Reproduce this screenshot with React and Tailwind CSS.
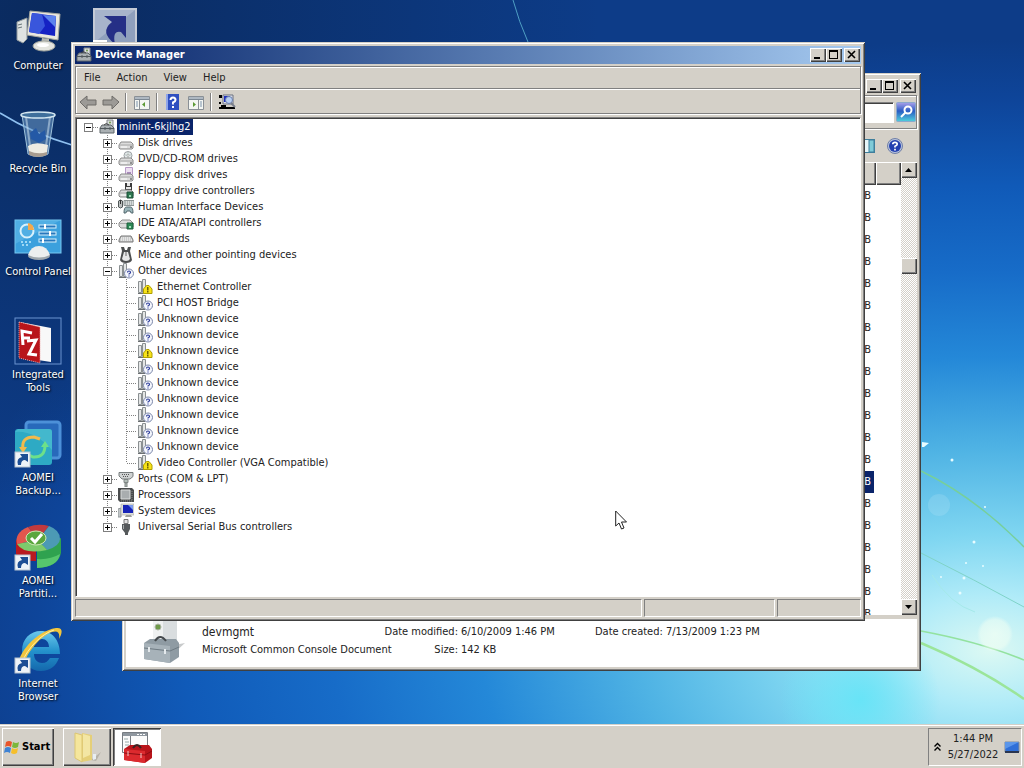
import { useState } from "react";

const RAISED =
  "bg-[#d4d0c8] shadow-[inset_1px_1px_#fff,inset_-1px_-1px_#404040,inset_-2px_-2px_#808080]";
const FRAME =
  "bg-[#d4d0c8] p-1 shadow-[inset_1px_1px_#d4d0c8,inset_-1px_-1px_#404040,inset_2px_2px_#fff,inset_-2px_-2px_#808080]";
const ETCHED = "border border-[#808080] shadow-[1px_1px_#fff,inset_1px_1px_#fff]";

/* ---------- wallpaper ---------- */

const Wallpaper = () => (
  <svg className="absolute inset-0 h-full w-full" viewBox="0 0 1024 724" preserveAspectRatio="none" aria-hidden="true">
    <defs>
      <radialGradient id="sky" gradientUnits="userSpaceOnUse" cx="0" cy="0" r="1" gradientTransform="translate(990 650) scale(1060 610)">
        <stop offset="0" stopColor="#dcf9f3" />
        <stop offset=".09" stopColor="#b0ebf8" />
        <stop offset=".19" stopColor="#7fd6f1" />
        <stop offset=".33" stopColor="#4fb3e4" />
        <stop offset=".48" stopColor="#2488d8" />
        <stop offset=".62" stopColor="#176cc8" />
        <stop offset=".76" stopColor="#105ab8" />
        <stop offset=".9" stopColor="#0e459a" />
        <stop offset="1" stopColor="#0d3c88" />
      </radialGradient>
      <radialGradient id="cyan">
        <stop offset="0" stopColor="#68e4f7" />
        <stop offset="1" stopColor="#68e4f7" stopOpacity="0" />
      </radialGradient>
      <radialGradient id="night">
        <stop offset="0" stopColor="#0a2a5e" />
        <stop offset="1" stopColor="#0a2a5e" stopOpacity="0" />
      </radialGradient>
      <radialGradient id="bokeh">
        <stop offset="0" stopColor="#f2fff4" stopOpacity=".7" />
        <stop offset=".8" stopColor="#f2fff4" stopOpacity=".5" />
        <stop offset="1" stopColor="#f2fff4" stopOpacity="0" />
      </radialGradient>
    </defs>
    <rect width="1024" height="724" fill="url(#sky)" />
    <ellipse cx="40" cy="20" rx="560" ry="480" fill="url(#night)" />
    <ellipse cx="860" cy="700" rx="80" ry="80" fill="url(#cyan)" />
    <path d="M0 113Q34 134 72 145" fill="none" stroke="#8fc0f0" strokeWidth="1.5" />
    <path d="M513 0Q519 22 528 42" fill="none" stroke="#4f9fc4" strokeWidth="1" />
    <g fill="none">
      <path d="M921 471Q975 497 1024 547" stroke="#77cf9a" strokeWidth="1.5" />
      <path d="M921 553Q975 580 1024 607" stroke="#7fd3c8" strokeWidth="1" />
      <path d="M921 631Q980 642 1024 660" stroke="#93e2a0" strokeWidth="1.5" />
      <path d="M921 643Q980 668 1024 699" stroke="#9be59a" strokeWidth="2.5" />
      <path d="M932 575Q950 604 975 612" stroke="#a5e9ea" strokeWidth="1" />
    </g>
    <circle cx="995" cy="634" r="18" fill="url(#bokeh)" />
    <circle cx="939" cy="505" r="11" fill="#fff" opacity=".12" />
    <g fill="#e8fcff">
      <path d="M922 442l7 1-5 4-2 0z" />
      <circle cx="952" cy="460" r="1.5" />
      <circle cx="974" cy="542" r="1.5" />
      <circle cx="966" cy="563" r="1" />
      <circle cx="964" cy="578" r="1.5" />
      <circle cx="960" cy="593" r="1.5" />
      <circle cx="983" cy="566" r="1" />
      <circle cx="985" cy="507" r="1" />
      <circle cx="941" cy="577" r="1" />
    </g>
  </svg>
);

/* ---------- desktop icons ---------- */

const ShortcutMark = () => (
  <g>
    <rect x="1" y="32" width="15" height="15" fill="#eef3f8" stroke="#b8c4d0" />
    <path d="M4 45Q2 38 8 37L6 34H14V42L11 40Q7 40 7 45Z" fill="#1d4e94" />
  </g>
);

const ComputerIcon = () => (
  <svg viewBox="0 0 48 48" className="h-12 w-12">
    <path d="M3 14L13 10V31L9 35 3 32z" fill="#dfe3e2" stroke="#8f989b" />
    <path d="M4 17l4-1M4 20l4-1" stroke="#687579" />
    <path d="M16 3L46 6 44 32 13 27z" fill="#e9e8df" stroke="#a5a69e" />
    <path d="M18 5L42 8 41 28 15 24z" fill="#1522c4" />
    <path d="M18 5L28 6 31 18 25 26 15 24z" fill="#3956dc" />
    <path d="M29 7L42 8 41 19z" fill="#5c83ee" />
    <path d="M28 30l7 1v5l-8 0z" fill="#b6b8b2" />
    <ellipse cx="30" cy="38" rx="11" ry="5" fill="#e4e5df" stroke="#a2a59d" />
    <ellipse cx="29" cy="37" rx="6" ry="2" fill="#fff" />
  </svg>
);

const RecycleIcon = () => (
  <svg viewBox="0 0 48 48" className="h-12 w-12">
    <path d="M8 4L40 4 34 43Q24 48 14 43z" fill="#6f9cc8" fillOpacity=".55" stroke="#9fc3dc" />
    <path d="M12 6l5 36M36 6l-5 36" stroke="#d5e8f4" strokeOpacity=".5" strokeWidth="2" />
    <path d="M16 22l6-5 3 6 6-4 1 9-7 4-8-4z" fill="#2459a6" />
    <path d="M14 35Q21 30 34 34L33 42Q24 46 15 42z" fill="#efece2" />
    <path d="M15 40Q24 44 33 41L33 44Q24 48 15 44z" fill="#a89c90" />
    <ellipse cx="24" cy="4" rx="17" ry="3" fill="#3f6f9c" stroke="#d5e8f2" strokeWidth="1.5" />
  </svg>
);

const ControlPanelIcon = () => (
  <svg viewBox="0 0 48 48" className="h-12 w-12">
    <rect x="1" y="6" width="46" height="33" fill="#3ba0dd" stroke="#78c8f0" />
    <path d="M1 6H47L1 30z" fill="#68bdec" fillOpacity=".5" />
    <circle cx="13" cy="17" r="6.500" fill="none" stroke="#d9f1fc" strokeWidth="2" />
    <path d="M14 16V9A7 7 0 0 1 20 16z" fill="#f5a94b" />
    <path d="M7 28h2M11 28h2M15 28h2M8 31h2M12 31h2" stroke="#9ed8f5" strokeWidth="2" />
    <g fill="#2677bd" stroke="#d7f0fb">
      <rect x="25" y="11" width="17" height="3" />
      <rect x="25" y="18" width="17" height="3" />
      <rect x="25" y="25" width="17" height="3" />
    </g>
    <path d="M31 10v5M36 17v5M29 24v5" stroke="#fff" strokeWidth="2" />
    <ellipse cx="25" cy="42" rx="11" ry="4" fill="#9fa7ac" />
    <path d="M14 41Q17 32 25 32T36 41Q25 46 14 41z" fill="#eceeee" />
  </svg>
);

const ToolsIcon = () => (
  <svg viewBox="0 0 48 48" className="h-12 w-12">
    <rect x="1" y="1" width="46" height="46" fill="none" stroke="#6b93cf" />
    <path d="M6 5L37 11V45L24 43z" fill="#f8f8f8" />
    <path d="M5 5L26 10V46L5 41z" fill="#b8151b" stroke="#eda5a5" strokeDasharray="1 1" />
    <path d="M9 28L8 14 18 16M9 21L16 21" fill="none" stroke="#fff" strokeWidth="3" />
    <path d="M13 24L22 23 15 37 23 38" fill="none" stroke="#fff" strokeWidth="3" />
  </svg>
);

const BackupIcon = () => (
  <svg viewBox="0 0 48 48" className="h-12 w-12">
    <rect x="12" y="2" width="34" height="36" rx="3" fill="#2869bb" stroke="#4c90d8" strokeWidth="3" />
    <rect x="1" y="9" width="37" height="36" rx="3" fill="#2eaac4" />
    <path d="M1 12Q20 10 38 30V12Q38 9 35 9H4z" fill="#51c2d3" fillOpacity=".6" />
    <path d="M9 29Q7 17 20 17L26 19" fill="none" stroke="#f1ba4c" strokeWidth="3" />
    <path d="M5 27h8l-4 6z" fill="#f1ba4c" />
    <path d="M31 25Q31 38 19 37L13 34" fill="none" stroke="#6de089" strokeWidth="3" />
    <path d="M27 27h8l-4-6z" fill="#6de089" />
    <ShortcutMark />
  </svg>
);

const PartitionIcon = () => (
  <svg viewBox="0 0 48 48" className="h-12 w-12">
    <path d="M2 17V31Q10 39 22 38V24z" fill="#b81a20" />
    <path d="M23 25V45Q44 44 47 30V15z" fill="#2fa24f" />
    <path d="M23 36V45Q44 44 46 31Q36 37 23 36z" fill="#57c66d" />
    <path d="M24 17L3 21Q0 10 14 4z" fill="#e2564d" />
    <path d="M24 17L14 4Q24 0 35 3z" fill="#c03a3e" />
    <path d="M24 17L35 3Q46 7 46 16Q46 23 33 27z" fill="#4c9ab5" />
    <path d="M24 17L33 27Q10 32 3 21z" fill="#7dca6c" />
    <ellipse cx="22" cy="15" rx="10" ry="7" fill="#5aa63d" stroke="#cfe8b8" />
    <path d="M17 15l4 4 7-8" fill="none" stroke="#fff" strokeWidth="3" />
    <ShortcutMark />
  </svg>
);

const BrowserIcon = () => (
  <svg viewBox="0 0 48 48" className="h-12 w-12">
    <defs>
      <linearGradient id="ie" x2="0" y2="1">
        <stop offset="0" stopColor="#6cc8ec" />
        <stop offset=".5" stopColor="#2492cc" />
        <stop offset="1" stopColor="#1468ac" />
      </linearGradient>
    </defs>
    <path
      fill="url(#ie)"
      fillRule="evenodd"
      d="M27 5C38 5 46 14 46 28H20C20 34 24 37 28 37C32 37 34 35 36 32H45C42 40 36 45 27 45C16 45 8 37 8 25C8 13 16 5 27 5ZM20 21H35C35 16 32 13 28 13C23 13 20 16 20 21Z"
    />
    <path d="M5 44C-1 35 18 6 42 2C50 1 48 8 45 13C46 7 44 4 38 6C24 11 10 31 9 42Z" fill="#f2c53d" />
    <path d="M8 36C14 22 27 8 40 4" fill="none" stroke="#fdf0a8" />
    <ShortcutMark />
  </svg>
);

const ShortcutFileIcon = () => (
  <svg viewBox="0 0 48 48" className="h-12 w-12">
    <rect x="3" y="1" width="42" height="44" fill="#8fa0bd" stroke="#c5cbd6" strokeWidth="2" />
    <path d="M4 2H44L4 34z" fill="#b7c2d4" fillOpacity=".6" />
    <path d="M13 8H35V30L30 24Q21 22 24 36Q8 24 21 14z" fill="#252f86" />
    <rect x="2" y="32" width="14" height="14" fill="#fff" />
  </svg>
);

const DESKTOP_ICONS = [
  { lines: ["Computer"], Icon: ComputerIcon },
  { lines: ["Recycle Bin"], Icon: RecycleIcon },
  { lines: ["Control Panel"], Icon: ControlPanelIcon },
  { lines: ["Integrated", "Tools"], Icon: ToolsIcon },
  { lines: ["AOMEI", "Backup..."], Icon: BackupIcon },
  { lines: ["AOMEI", "Partiti..."], Icon: PartitionIcon },
  { lines: ["Internet", "Browser"], Icon: BrowserIcon },
];

const DesktopIcon = ({ lines, Icon }) => (
  <button type="button" className="flex h-[103px] w-full flex-col items-center pt-2 text-white [text-shadow:1px_1px_2px_#000]">
    <Icon />
    <span className="mt-[3px] whitespace-nowrap text-center leading-[13px]">
      {lines.map((line) => (
        <span key={line} className="block">{line}</span>
      ))}
    </span>
  </button>
);

/* ---------- window parts ---------- */

const WindowButtons = () => (
  <div className="flex pr-[1px]">
    <button type="button" aria-label="Minimize" className={`h-[14px] w-4 ${RAISED}`}>
      <svg viewBox="0 0 16 14" className="h-full w-full"><path d="M4 9h6v2H4z" /></svg>
    </button>
    <button type="button" aria-label="Maximize" className={`h-[14px] w-4 ${RAISED}`}>
      <svg viewBox="0 0 16 14" className="h-full w-full">
        <path fillRule="evenodd" d="M3 2h9v9H3zM4 4v6h7V4z" />
      </svg>
    </button>
    <button type="button" aria-label="Close" className={`ml-[2px] h-[14px] w-4 ${RAISED}`}>
      <svg viewBox="0 0 16 14" className="h-full w-full">
        <path d="M4 3l7 7M11 3l-7 7" stroke="#000" strokeWidth="1.6" />
      </svg>
    </button>
  </div>
);

const HelpBadge = () => (
  <g>
    <circle cx="11" cy="10.500" r="4.500" fill="#f4f6fc" stroke="#7a86a8" />
    <path d="M9.500 9.500Q9.500 8 11 8T12.500 9.500Q12.500 10.300 11 11V11.500M11 12.500v1" fill="none" stroke="#2a3a9a" strokeWidth="1.200" />
  </g>
);

const Drive = () => (
  <g>
    <path d="M1 10L3 7H13L15 9V13L14 14H2L1 13z" fill="#dcdcdc" stroke="#8a8a8a" />
    <path d="M1 10H15" stroke="#a8a8a8" />
    <path d="M3 12h6" stroke="#fff" />
    <path d="M12 12h2" stroke="#444" />
  </g>
);

const DEVICE_ART = {
  computer: (
    <g>
      <path d="M8 1h6v8H8z" fill="#d9dcdc" stroke="#858a8c" />
      <circle cx="11" cy="3.500" r="1" fill="#6f9a4a" />
      <path d="M1 9L3 6H12L15 9V14H1z" fill="#aab0b3" stroke="#5f666a" />
      <path d="M1 9.500H15M6 8v3M11 8v3" stroke="#50585c" />
      <path d="M5 6Q7 3 10 6" fill="none" stroke="#444" />
    </g>
  ),
  disk: <Drive />,
  dvd: (
    <g>
      <circle cx="10" cy="4.500" r="4" fill="#e8ecee" stroke="#9a9fa2" />
      <path d="M10 1v7M6.500 4h7" stroke="#b9c6c0" />
      <circle cx="10" cy="4.500" r="1" fill="#fff" stroke="#888" strokeWidth=".5" />
      <Drive />
    </g>
  ),
  floppy: (
    <g>
      <path d="M7.500 .5h7v7h-7z" fill="#ecdff0" stroke="#b79ac6" />
      <path d="M9 5h4v2H9z" fill="#a98abd" />
      <Drive />
    </g>
  ),
  floppyctl: (
    <g>
      <path d="M7 0h7v7H7z" fill="#3c3c3c" />
      <path d="M9 0h3v3H9zM8 4h5v2H8z" fill="#e6e6e6" />
      <Drive />
      <path d="M9 9h6v6H9z" fill="#2d7750" stroke="#1d4e36" />
      <path d="M11 12h2v2h-2z" fill="#9ad4b2" />
    </g>
  ),
  hid: (
    <g>
      <path d="M.5 2Q2.500 0 4.500 2V8Q2.500 10 .5 8z" fill="#bbbfbf" stroke="#515758" />
      <path d="M2.500 1v4" stroke="#333" />
      <path d="M6 1.500h10v5H6z" fill="#d5dada" stroke="#8c9494" />
      <path d="M7 3h8M7 5h8" stroke="#87908f" strokeDasharray="1 1" />
      <path d="M6 14Q6 8 8.500 8H12.500Q15 8 15 14Q13 15 12 12H9Q8 15 6 14z" fill="#9bb6bb" stroke="#52676c" />
    </g>
  ),
  ide: (
    <g>
      <path d="M1 8L4 5H12L15 8V12L13 13H3L1 11z" fill="#dcdcdc" stroke="#8a8a8a" />
      <path d="M1 8.500H15" stroke="#aaa" />
      <path d="M9 8h6v6H9z" fill="#2d8a57" stroke="#1d5e3d" />
      <path d="M11 11h2v2h-2z" fill="#a5e0bd" />
    </g>
  ),
  keyboard: (
    <g>
      <path d="M1 9L3 5H13L15 9V11H1z" fill="#c9caca" stroke="#777" />
      <path d="M3 7h10M3 9h11" stroke="#fff" strokeDasharray="1 1" />
    </g>
  ),
  mouse: (
    <g>
      <path d="M3 0H6L7 3H9L10 0H13L12 4L14 13Q13 16 8 16T2 13L4 4z" fill="#4c4e4f" />
      <path d="M6 5h4l2 7Q11 14 8 14T4 12z" fill="#e7e8e8" />
      <path d="M8 5v4" stroke="#666" />
    </g>
  ),
  other: (
    <g>
      <path d="M1.500 2.500h3v11h-3zM5.500 .5h3v13h-3z" fill="#e4e6e6" stroke="#8b9092" />
      <path d="M1 14.500h7" stroke="#6b6f71" />
      <HelpBadge />
    </g>
  ),
  warn: (
    <g>
      <path d="M1.500 2.500h3v11h-3zM5.500 .5h3v13h-3z" fill="#e4e6e6" stroke="#8b9092" />
      <path d="M1 14.500h7" stroke="#6b6f71" />
      <path d="M6.500 14.500V10L9.500 6.500H12L15 10V14.500z" fill="#f7e21a" stroke="#b0a000" />
      <path d="M10.800 8v3.500M10.800 12v1.500" stroke="#4c4500" strokeWidth="1.200" />
    </g>
  ),
  ports: (
    <g>
      <path d="M1 1.500h14v4L12 8H4L1 5z" fill="#cfd2d2" stroke="#777c7d" />
      <path d="M4 3.500h8M5 5.500h6" stroke="#555" strokeDasharray="1 1" />
      <path d="M6 8.500h4v3H6zM7 12h2v4H7z" fill="#b4bfba" stroke="#808684" />
    </g>
  ),
  cpu: (
    <g>
      <path d="M0 1h14l2 2v12H2l-2-2z" fill="#4a4c4d" />
      <path d="M3 3h9v9H3z" fill="#a9adaf" stroke="#dadcdc" />
      <path d="M14 4v10M3 14h11" stroke="#888" strokeDasharray="1 1" />
    </g>
  ),
  system: (
    <g>
      <path d="M0 6l3-1v9H0z" fill="#c3c7c9" stroke="#90979a" />
      <path d="M3 1h13v11H3z" fill="#dfe0da" stroke="#a9aaa4" strokeWidth=".6" />
      <path d="M5 2h10v8H5z" fill="#1824b8" />
      <path d="M10 2h5v5z" fill="#7a9af0" />
      <path d="M8 12h5l1 2H7z" fill="#9fa19c" />
    </g>
  ),
  usb: (
    <g>
      <path d="M6 .5h4v4H6z" fill="#e2e2e2" stroke="#777" />
      <path d="M4 5h8v5l-2 4v2H7v-2L4 10z" fill="#55595b" />
      <path d="M5.500 6v4" stroke="#a5a9aa" />
    </g>
  ),
};

const DeviceIcon = ({ kind }) => (
  <svg viewBox="0 0 16 16" className="mr-[2px] ml-[1px] h-4 w-4 shrink-0" aria-hidden="true">
    {DEVICE_ART[kind]}
  </svg>
);

/* ---------- tree ---------- */

// line: "" blank, "v" through line, "t" tee, "l" last branch, "h" root stub
const Branch = ({ line, box }) => (
  <svg viewBox="0 0 19 16" className="h-4 w-[19px]" shapeRendering="crispEdges" aria-hidden="true">
    <g stroke="#808080" strokeDasharray="1 1" fill="none">
      {(line === "v" || line === "t") && <path d="M9.500 0V16" />}
      {line === "l" && <path d="M9.500 0V8" />}
      {(line === "t" || line === "l" || line === "h") && <path d="M10 8.500H19" />}
    </g>
    {box && (
      <g>
        <rect x="5.500" y="4.500" width="8" height="8" fill="#fff" stroke="#7f7f7f" />
        <path d="M7 8.500h5" stroke="#000" />
        {box === "+" && <path d="M9.500 6v5" stroke="#000" />}
      </g>
    )}
  </svg>
);

const CATEGORIES = [
  { name: "Disk drives", icon: "disk" },
  { name: "DVD/CD-ROM drives", icon: "dvd" },
  { name: "Floppy disk drives", icon: "floppy" },
  { name: "Floppy drive controllers", icon: "floppyctl" },
  { name: "Human Interface Devices", icon: "hid" },
  { name: "IDE ATA/ATAPI controllers", icon: "ide" },
  { name: "Keyboards", icon: "keyboard" },
  { name: "Mice and other pointing devices", icon: "mouse" },
  {
    name: "Other devices",
    icon: "other",
    children: [
      { name: "Ethernet Controller", icon: "warn" },
      { name: "PCI HOST Bridge", icon: "other" },
      { name: "Unknown device", icon: "other" },
      { name: "Unknown device", icon: "other" },
      { name: "Unknown device", icon: "warn" },
      { name: "Unknown device", icon: "other" },
      { name: "Unknown device", icon: "other" },
      { name: "Unknown device", icon: "other" },
      { name: "Unknown device", icon: "other" },
      { name: "Unknown device", icon: "other" },
      { name: "Unknown device", icon: "other" },
      { name: "Video Controller (VGA Compatible)", icon: "warn" },
    ],
  },
  { name: "Ports (COM & LPT)", icon: "ports" },
  { name: "Processors", icon: "cpu" },
  { name: "System devices", icon: "system" },
  { name: "Universal Serial Bus controllers", icon: "usb" },
];

const DeviceTree = () => {
  const [open, setOpen] = useState(true);

  return (
    <ul className="pl-[2px] leading-4 whitespace-nowrap">
      <li>
        <div className="flex h-4 items-center">
          <button type="button" aria-label="Collapse minint-6kjlhg2"><Branch line="h" box="-" /></button>
          <DeviceIcon kind="computer" />
          <span className="bg-[#0a246a] px-[2px] text-white">minint-6kjlhg2</span>
        </div>
        <ul>
          {CATEGORIES.map((cat, i) => (
            <li key={cat.name}>
              <div className="flex h-4 items-center">
                <Branch line="" />
                <button
                  type="button"
                  aria-label={`Toggle ${cat.name}`}
                  onClick={() => cat.children && setOpen(!open)}
                >
                  <Branch line={i === CATEGORIES.length - 1 ? "l" : "t"} box={cat.children && open ? "-" : "+"} />
                </button>
                <DeviceIcon kind={cat.icon} />
                <span className="px-[2px]">{cat.name}</span>
              </div>
              {cat.children && open && (
                <ul>
                  {cat.children.map((dev, j) => (
                    <li key={j} className="flex h-4 items-center">
                      <Branch line="" />
                      <Branch line="v" />
                      <Branch line={j === cat.children.length - 1 ? "l" : "t"} />
                      <DeviceIcon kind={dev.icon} />
                      <span className="px-[2px]">{dev.name}</span>
                    </li>
                  ))}
                </ul>
              )}
            </li>
          ))}
        </ul>
      </li>
    </ul>
  );
};

/* ---------- Device Manager ---------- */

const ToolButton = ({ label, children }) => (
  <button type="button" aria-label={label} className="flex h-[22px] w-[23px] items-center justify-center">
    <svg viewBox="0 0 18 16" className="h-4 w-[18px]">{children}</svg>
  </button>
);

const ToolSeparator = () => <div className="mx-[3px] h-[18px] w-[2px] border-l border-[#808080] bg-white" />;

const PaneArt = ({ arrow }) => (
  <g>
    <path d="M1.500 2.500h15v13h-15z" fill="#f4f6f2" stroke="#8a9096" />
    <path d="M2 3h14v2H2z" fill="#aeb8c2" />
    <path d="M2 5.500h14" stroke="#7c8894" />
    <path d={arrow === "left" ? "M6.500 6v9" : "M11.500 6v9"} stroke="#8a9096" />
    <path d={arrow === "left" ? "M3 8h2M3 10h2M3 12h2" : "M13 8h2M13 10h2M13 12h2"} stroke="#7d93ab" />
    <path d={arrow === "left" ? "M12 8v5l-3-2.500z" : "M6 8v5l3-2.500z"} fill="#5c9a34" />
  </g>
);

const DeviceManager = () => (
  <section className={`absolute top-[42px] right-[159px] bottom-[103px] left-[71px] flex flex-col ${FRAME}`}>
    <header className="flex h-[18px] items-center bg-linear-to-r from-[#0a246a] to-[#a6caf0]">
      <DeviceIcon kind="computer" />
      <h1 className="flex-1 pl-[1px] font-bold text-white">Device Manager</h1>
      <WindowButtons />
    </header>

    <div className={`mt-[2px] ${ETCHED}`}>
      <nav className="flex h-[22px] items-center border-b border-[#808080]">
        {["File", "Action", "View", "Help"].map((item) => (
          <button key={item} type="button" className="px-2">{item}</button>
        ))}
      </nav>
      <div className="flex h-6 items-center border-t border-white">
        <ToolButton label="Back">
          <path d="M1 8l7-6v4h9v5H8v4z" fill="#9c9a96" stroke="#6e6c69" />
        </ToolButton>
        <ToolButton label="Forward">
          <path d="M17 8l-7-6v4H1v5h9v4z" fill="#9c9a96" stroke="#6e6c69" />
        </ToolButton>
        <ToolSeparator />
        <ToolButton label="Show/Hide Console Tree"><PaneArt arrow="left" /></ToolButton>
        <ToolSeparator />
        <ToolButton label="Help">
          <path d="M2 0h13v16H2z" fill="#2f4fc0" />
          <path d="M2 0h2v16H2z" fill="#8fa5ea" />
          <path d="M6.500 6Q6.500 3.500 9 3.500T11.500 6Q11.500 7.500 9 8.500V10.500M9 12v2" fill="none" stroke="#fff" strokeWidth="2" />
        </ToolButton>
        <ToolButton label="Show/Hide Action Pane"><PaneArt arrow="right" /></ToolButton>
        <ToolSeparator />
        <ToolButton label="Scan for hardware changes">
          <path d="M1 1h3v3H1zM1 8h2v2H1zM1 13h16v2H1zM3 11h5v2H3z" />
          <path d="M5 1h10v9H5z" fill="#dfe2ea" stroke="#6b7080" />
          <path d="M6 2h6v6H6z" fill="#2030c0" />
          <circle cx="11" cy="6" r="3.500" fill="#b9d0f2" stroke="#6b7fae" />
          <path d="M13 9l4 4" stroke="#7a7f8c" strokeWidth="2" />
        </ToolButton>
      </div>
    </div>

    <main className="mt-[3px] min-h-0 flex-1 overflow-hidden border border-[#808080] border-r-[#fff] border-b-[#fff] bg-white">
      <div className="h-full border-t border-l border-[#404040]">
        <DeviceTree />
      </div>
    </main>

    <footer className="mt-[2px] flex h-[18px] gap-[2px]">
      <div className="flex-1 border border-[#808080] border-r-white border-b-white" />
      <div className="w-[131px] border border-[#808080] border-r-white border-b-white" />
      <div className="w-[84px] border border-[#808080] border-r-white border-b-white" />
    </footer>
  </section>
);

/* ---------- Explorer window behind ---------- */

const ROWS = Array.from({ length: 20 }, (_, i) => ({ id: i, selected: i === 13 }));

const Explorer = () => (
  <section className={`absolute top-[73px] right-[103px] bottom-[53px] left-[122px] flex flex-col ${FRAME}`}>
    <header className="flex h-[18px] items-center justify-end">
      <WindowButtons />
    </header>

    <div className={`flex h-[34px] items-center justify-end gap-[2px] ${ETCHED}`}>
      <input
        type="text"
        aria-label="Search"
        className="h-[21px] w-40 border border-[#808080] border-r-white border-b-white bg-white shadow-[inset_0_1px_#404040] outline-none"
      />
      <button type="button" aria-label="Search">
        <svg viewBox="0 0 20 20" className="h-5 w-5">
          <defs>
            <linearGradient id="go" x2="0" y2="1">
              <stop offset="0" stopColor="#a9a0ea" />
              <stop offset=".45" stopColor="#2a5cc4" />
              <stop offset="1" stopColor="#4fd0dc" />
            </linearGradient>
          </defs>
          <rect x=".5" y=".5" width="19" height="19" rx="1" fill="url(#go)" stroke="#8aa8cc" />
          <circle cx="12" cy="8" r="3.500" fill="none" stroke="#fff" strokeWidth="2" />
          <path d="M9.500 10.500L5 15" stroke="#fff" strokeWidth="2" />
        </svg>
      </button>
    </div>

    <div className="flex h-[33px] items-center justify-end gap-3 pr-[14px]">
      <svg viewBox="0 0 16 16" className="h-4 w-4" aria-hidden="true">
        <rect x=".5" y="1.500" width="15" height="13" fill="#e8f6f8" stroke="#3f7f9c" />
        <path d="M10 2h5v12h-5z" fill="#7fcbd8" stroke="#3f7f9c" />
      </svg>
      <button type="button" aria-label="Get help">
        <svg viewBox="0 0 16 16" className="h-4 w-4">
          <circle cx="8" cy="8" r="7.500" fill="#b9c4dc" stroke="#6f7fa8" />
          <circle cx="8" cy="8" r="6" fill="#2340b0" />
          <path d="M5.800 6.300Q5.800 4.300 8 4.300T10.200 6.300Q10.200 7.500 8 8.300V9.500M8 10.700v1.700" fill="none" stroke="#fff" strokeWidth="1.700" />
        </svg>
      </button>
    </div>

    <div className="flex min-h-0 flex-1">
      <div className="flex-1 overflow-hidden bg-white">
        <table className="w-full border-collapse text-right">
          <thead>
            <tr className="h-[23px]">
              <th aria-label="Size" className={`p-0 ${RAISED}`} />
              <th aria-label="More" className={`w-[25px] p-0 ${RAISED}`} />
            </tr>
          </thead>
          <tbody>
            {ROWS.map((row) => (
              <tr key={row.id} className="h-[22px]">
                <td className="p-0 pr-[2px]">
                  <div className={row.selected ? "bg-[#0a246a] pr-[3px] leading-[22px] text-white" : "pr-[3px] leading-[22px]"}>
                    KB
                  </div>
                </td>
                <td className="p-0" />
              </tr>
            ))}
          </tbody>
        </table>
      </div>
      <div className="flex w-4 flex-col bg-[repeating-conic-gradient(#fff_0_25%,#d4d0c8_0_50%)] bg-[length:2px_2px]">
        <button type="button" aria-label="Scroll up" className={`h-4 w-4 ${RAISED}`}>
          <svg viewBox="0 0 16 16" className="h-4 w-4"><path d="M4 10h7L7.500 6z" /></svg>
        </button>
        <div className={`mt-20 h-4 w-4 ${RAISED}`} />
        <button type="button" aria-label="Scroll down" className={`mt-auto h-4 w-4 ${RAISED}`}>
          <svg viewBox="0 0 16 16" className="h-4 w-4"><path d="M4 6h7l-3.500 4z" /></svg>
        </button>
      </div>
    </div>

    <div className="mt-1 flex h-12 items-start bg-white pl-4 text-[#222]">
      <svg viewBox="0 0 44 48" className="h-12 w-11 shrink-0" aria-hidden="true">
        <path d="M11 0h24v26H11z" fill="#d9dddf" />
        <path d="M11 0h10v26H11z" fill="#eff1f1" />
        <circle cx="16" cy="8" r="3" fill="#6f9a4a" stroke="#aeb6a8" />
        <path d="M32 26L43 24 32 34z" fill="#c8cacb" />
        <path d="M2 24L8 20H34L37 24V38L28 44 2 40z" fill="#8f9ba3" />
        <path d="M2 24L28 27V44L2 40z" fill="#a7b2b9" />
        <path d="M2 29L28 32 37 28" fill="none" stroke="#6e7a82" />
        <path d="M13 22Q18 14 24 22" fill="none" stroke="#44494d" strokeWidth="2" />
        <path d="M7 28v5M23 30v5" stroke="#e4e9ec" strokeWidth="2" />
      </svg>
      <div className="grid grid-cols-[182px_211px_1fr] pt-1 pl-4 leading-[18px] whitespace-nowrap">
        <div className="text-[12px]">devmgmt</div>
        <div className="flex gap-[3px]"><span className="w-[74px] text-right">Date modified:</span>6/10/2009 1:46 PM</div>
        <div>Date created: 7/13/2009 1:23 PM</div>
        <div>Microsoft Common Console Document</div>
        <div className="flex gap-[3px]"><span className="w-[74px] text-right">Size:</span>142 KB</div>
      </div>
    </div>
  </section>
);

/* ---------- taskbar ---------- */

const Taskbar = () => (
  <footer className="flex h-11 shrink-0 items-center border-t border-[#d4d0c8] bg-[#d4d0c8] px-[2px] shadow-[inset_0_1px_#fff]">
    <button type="button" className={`flex h-[38px] w-[52px] items-center gap-[2px] pl-[2px] font-bold text-black ${RAISED}`}>
      <svg viewBox="0 0 16 16" className="h-4 w-4 shrink-0" aria-hidden="true">
        <path d="M2 3Q5 1 8 3L7 8Q4 6 1 8z" fill="#e8552b" />
        <path d="M9 3Q12 5 15 3L14 8Q11 10 8 8z" fill="#7cb73b" />
        <path d="M1 9Q4 7 7 9L6 14Q3 12 0 14z" fill="#3f83d4" />
        <path d="M8 9Q11 11 14 9L13 14Q10 16 7 14z" fill="#f6bf2c" />
      </svg>
      Start
    </button>
    <button type="button" aria-label="Explorer" className={`ml-[9px] flex h-[38px] w-12 items-center justify-center ${RAISED}`}>
      <svg viewBox="0 0 32 32" className="h-8 w-8">
        <path d="M20 29l10-8-5 9z" fill="#b5b1a8" />
        <path d="M11 2L21 4V29L11 31z" fill="#e5cf78" />
        <path d="M12 3L19 5V24L12 27z" fill="#f3e6a4" />
        <path d="M4 2L11 4V31L4 27z" fill="#f5e69c" stroke="#dcc673" />
        <path d="M22 23h3v5l-3 1z" fill="#e8eef2" />
      </svg>
    </button>
    <button
      type="button"
      aria-label="Device Manager"
      className="ml-[2px] flex h-[38px] w-12 items-center justify-center bg-white shadow-[inset_1px_1px_#404040,inset_-1px_-1px_#fff,inset_2px_2px_#808080]"
    >
      <svg viewBox="0 0 32 32" className="h-8 w-8">
        <path d="M1.500 1.500h25v20h-25z" fill="#fbfbfb" stroke="#777c82" />
        <path d="M2 2h24v3H2z" fill="#8f979f" />
        <path d="M16 3.500h9" stroke="#fff" strokeDasharray="2 1" />
        <path d="M9.500 5v16" stroke="#777c82" />
        <path d="M3 8h4M4 11h4M4 14h4" stroke="#9aa" />
        <path d="M3 18L9 14H28L31 18V27L24 32 3 29z" fill="#b8141a" />
        <path d="M3 18L24 20V32L3 29z" fill="#dc2a2e" />
        <path d="M3 22L24 24 31 20" fill="none" stroke="#8c0d12" />
        <path d="M12 17Q16 11 20 17" fill="none" stroke="#3a2222" strokeWidth="2" />
        <path d="M7 20v5M20 22v5" stroke="#f6c9c9" />
      </svg>
    </button>

    <div className="ml-auto flex h-[38px] items-center border border-[#808080] border-r-white border-b-white pr-[1px] pl-1 text-[#222]">
      <button type="button" aria-label="Show hidden icons">
        <svg viewBox="0 0 9 10" className="h-[10px] w-[9px]">
          <path d="M1.500 4.500l3-3 3 3M1.500 8.500l3-3 3 3" fill="none" stroke="#000" strokeWidth="1.400" />
        </svg>
      </button>
      <div className="w-[62px] text-center leading-4 whitespace-nowrap">
        <div>1:44 PM</div>
        <div>5/27/2022</div>
      </div>
      <svg viewBox="0 0 16 16" className="h-4 w-4" aria-hidden="true">
        <path d="M1 3h14v10H1z" fill="#2f6fd8" stroke="#7d8a9c" />
        <path d="M1 3h14L1 10z" fill="#5b96ea" />
        <path d="M1 12h14v2H1z" fill="#2a3550" />
      </svg>
    </div>
  </footer>
);

const App = () => (
  <div className="flex h-screen flex-col overflow-hidden bg-[#0e459c] font-['DejaVu_Sans_Condensed','DejaVu_Sans',sans-serif] text-[11px] leading-[14px] text-[#222]">
    <div className="relative min-h-0 flex-1 overflow-hidden">
      <Wallpaper />
      <div className="relative flex">
        <div className="w-[76px]">
          {DESKTOP_ICONS.map((item, i) => (
            <DesktopIcon key={i} {...item} />
          ))}
        </div>
        <div className="flex w-[78px] justify-center pt-2">
          <ShortcutFileIcon />
        </div>
      </div>
      <Explorer />
      <DeviceManager />
      <svg viewBox="0 0 13 20" className="absolute top-[510px] left-[615px] h-5 w-[13px]" aria-hidden="true">
        <path d="M.7 1V16L4 13L6.500 19L9 18L6.500 12H11.500z" fill="#fff" stroke="#222" />
      </svg>
    </div>
    <Taskbar />
  </div>
);

export default App;
